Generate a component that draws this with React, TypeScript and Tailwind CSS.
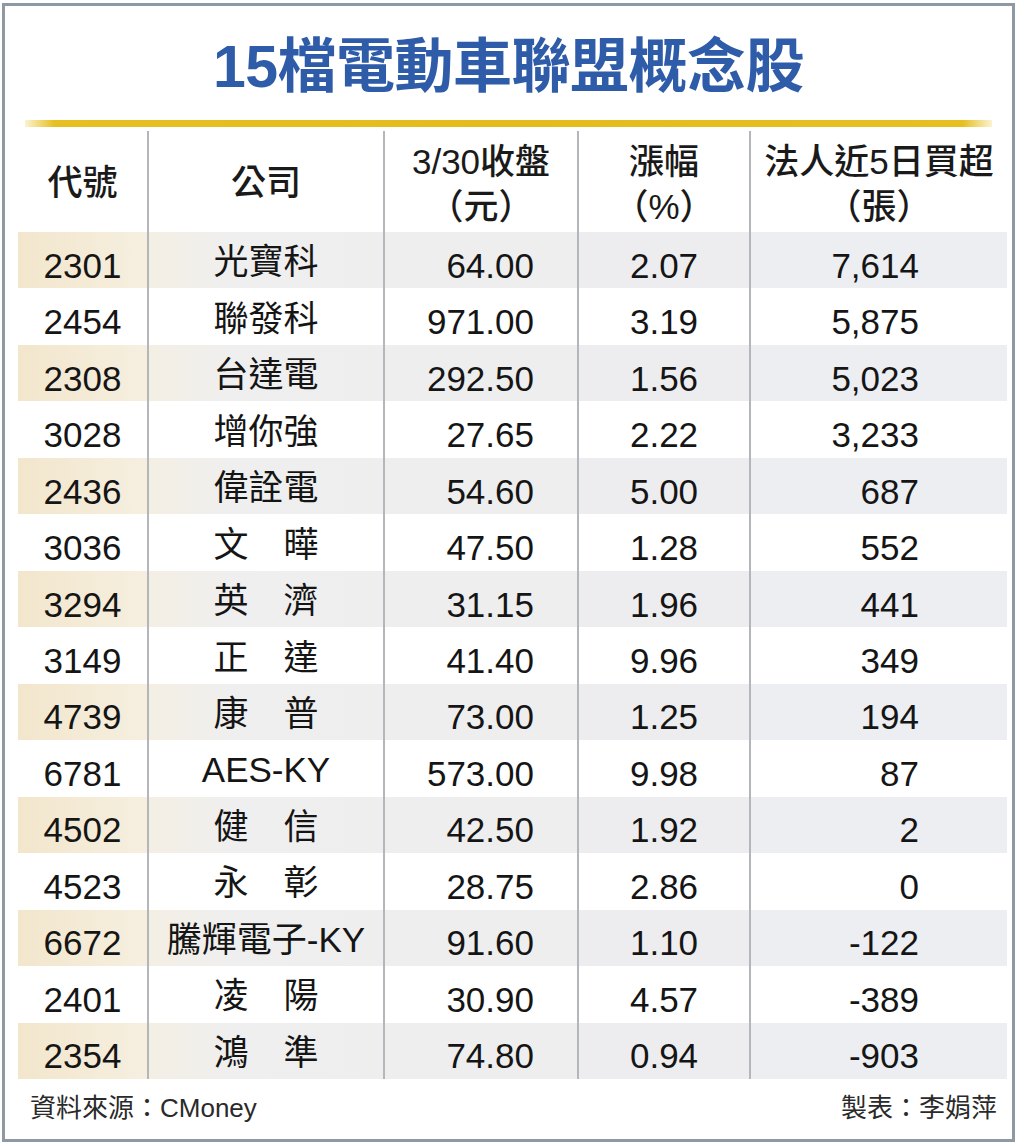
import React from "react";

const rows: [string, string, string, string, string][] = [
  ["2301", "光寶科", "64.00", "2.07", "7,614"],
  ["2454", "聯發科", "971.00", "3.19", "5,875"],
  ["2308", "台達電", "292.50", "1.56", "5,023"],
  ["3028", "增你強", "27.65", "2.22", "3,233"],
  ["2436", "偉詮電", "54.60", "5.00", "687"],
  ["3036", "文　曄", "47.50", "1.28", "552"],
  ["3294", "英　濟", "31.15", "1.96", "441"],
  ["3149", "正　達", "41.40", "9.96", "349"],
  ["4739", "康　普", "73.00", "1.25", "194"],
  ["6781", "AES-KY", "573.00", "9.98", "87"],
  ["4502", "健　信", "42.50", "1.92", "2"],
  ["4523", "永　彰", "28.75", "2.86", "0"],
  ["6672", "騰輝電子-KY", "91.60", "1.10", "-122"],
  ["2401", "凌　陽", "30.90", "4.57", "-389"],
  ["2354", "鴻　準", "74.80", "0.94", "-903"],
];

const font = { fontFamily: '"Liberation Sans", "Noto Sans CJK TC", sans-serif' };

export default function App() {
  return (
    <div className="bg-white w-[1024px] h-[1146px] pl-[2px] pt-[3px]" style={font}>
      <div className="w-[1013px] h-[1139px] border-[3px] border-[#8f99a4] bg-white flex flex-col">
        {/* Title */}
        <div className="h-[114px] flex items-center justify-center pt-[8px]">
          <h1 className="text-[59px] font-bold text-[#2f5ca9] leading-none tracking-[-0.5px]">
            15檔電動車聯盟概念股
          </h1>
        </div>
        {/* Gold bar */}
        <div className="mx-[20px] h-[7px] bg-[linear-gradient(to_right,#fbf3d2_0%,#e6c022_3%,#e3bc1c_50%,#e6c022_97%,#fbf3d2_100%)]" />
        {/* Table */}
        <div className="ml-[13px] w-[989px] text-[#151515]">
          {/* Header */}
          <div className="flex h-[105px] pt-[4px] text-[35px] font-medium text-[#1a1a1a]">
            <div className="w-[131px] border-r-2 border-[#b3b7bb] flex items-center justify-center pt-[4px]">
              代號
            </div>
            <div className="w-[236px] border-r-2 border-[#b3b7bb] flex items-center justify-center pt-[4px]">
              公司
            </div>
            <div className="w-[194px] border-r-2 border-[#b3b7bb] flex flex-col items-center justify-center leading-[45px] pt-[4px]">
              <span>3/30收盤</span>
              <span>（元）</span>
            </div>
            <div className="w-[172px] border-r-2 border-[#b3b7bb] flex flex-col items-center justify-center leading-[45px] pt-[4px]">
              <span>漲幅</span>
              <span>（%）</span>
            </div>
            <div className="w-[256px] flex flex-col items-center justify-center leading-[45px] pt-[4px]">
              <span>法人近5日買超</span>
              <span>（張）</span>
            </div>
          </div>
          {/* Rows */}
          {rows.map((r, i) => {
            const s = i % 2 === 0;
            return (
              <div key={r[0]} className="flex h-[56.47px] text-[35px] leading-none">
                <div
                  className={`w-[131px] border-r-2 border-[#b3b7bb] flex items-center justify-center pt-[10px] ${
                    s ? "bg-[linear-gradient(to_right,#f2e6cc,#f6efe0)]" : ""
                  }`}
                >
                  {r[0]}
                </div>
                <div
                  className={`w-[236px] border-r-2 border-[#b3b7bb] flex items-center justify-center pt-[3px] ${
                    s ? "bg-[linear-gradient(to_right,#f4efe4,#efefef_35%,#eeeeee)]" : ""
                  }`}
                >
                  {r[1]}
                </div>
                <div
                  className={`w-[194px] border-r-2 border-[#b3b7bb] flex items-center justify-end pr-[43px] pt-[10px] ${
                    s ? "bg-[#eeeeee]" : ""
                  }`}
                >
                  {r[2]}
                </div>
                <div
                  className={`w-[172px] border-r-2 border-[#b3b7bb] flex items-center justify-center pt-[10px] ${
                    s ? "bg-[#ededef]" : ""
                  }`}
                >
                  {r[3]}
                </div>
                <div
                  className={`w-[256px] flex items-center justify-end pr-[88px] pt-[10px] ${
                    s ? "bg-[#eceef2]" : ""
                  }`}
                >
                  {r[4]}
                </div>
              </div>
            );
          })}
        </div>
        {/* Footer */}
        <div className="flex-1 flex items-center justify-between pl-[25px] pr-[15px] text-[26px] text-[#2a2a2a] pb-[2px]">
          <span>資料來源：CMoney</span>
          <span>製表：李娟萍</span>
        </div>
      </div>
    </div>
  );
}
